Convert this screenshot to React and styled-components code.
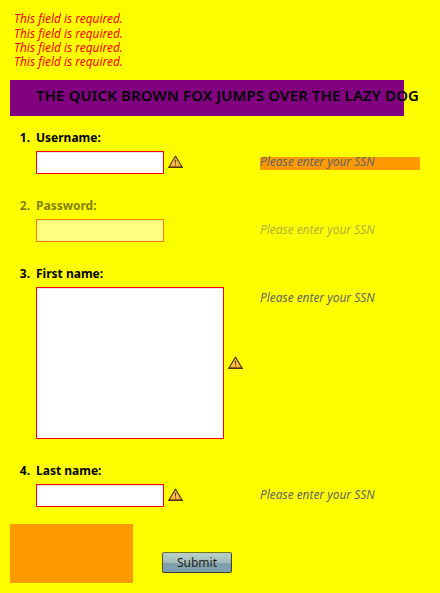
import React from 'react';
import styled, { createGlobalStyle } from 'styled-components';

const GlobalStyle = createGlobalStyle`
  * { box-sizing: border-box; }
  body {
    margin: 0;
    background: #ff0;
    color: #000;
    font-family: 'Noto Sans', sans-serif;
    font-size: 12px;
    line-height: 14.4px;
  }
`;

const Form = styled.form`
  width: 440px;
  height: 593px;
  padding: 11px 10px 10px;
  overflow: hidden;
`;

const Errors = styled.ul`
  list-style: none;
  margin: 0;
  padding: 0.2px 4px 0;
  height: 69px;
  color: #f00;
  font-size: 11.9px;
  font-style: italic;
`;

const Title = styled.h1`
  width: 394px;
  height: 36px;
  margin: 0 0 14px;
  padding-left: 26px;
  background: #800080;
  font-size: 14.9px;
  font-weight: 600;
  letter-spacing: 0.18px;
  line-height: 30px;
  text-transform: uppercase;
  white-space: nowrap;
`;

const Fields = styled.ol`
  list-style: none;
  margin: 0;
  padding: 0;
`;

const Row = styled.li`
  display: grid;
  grid-template-columns: 20px 218px 160px;
  grid-template-rows: 15px auto;
  row-gap: 6px;
  column-gap: 6px;
  height: ${(p) => p.$height}px;
  opacity: ${(p) => (p.$disabled ? 0.5 : 1)};
`;

const Number = styled.span`
  font-weight: 700;
  text-align: right;
  line-height: 15px;
`;

const Label = styled.label`
  grid-column: 2 / 4;
  font-weight: 700;
  line-height: 15px;
`;

const Control = styled.div`
  grid-column: 2;
  display: flex;
  align-items: center;
  align-self: start;
  gap: 4px;
`;

const Input = styled.input`
  display: block;
  width: 128px;
  height: 23px;
  margin: 0;
  padding: 3px;
  border: 1px solid #f00;
  border-radius: 0;
  background: #fff;
  box-shadow: inset 0 1px #e4e4e4;
  outline: none;
`;

const TextArea = styled(Input).attrs({ as: 'textarea' })`
  width: 188px;
  height: 152px;
  resize: none;
`;

const Hint = styled.div`
  align-self: start;
  height: 13px;
  margin-top: 6px;
  background: ${(p) => (p.$highlight ? '#f90' : 'transparent')};
  color: #666;
  font-size: 11.9px;
  font-style: italic;
  line-height: 9px;
`;

const Footer = styled.div`
  display: flex;
  align-items: flex-end;
  gap: 29px;
  height: 59px;
`;

const Block = styled.div`
  width: 123px;
  height: 59px;
  background: #f90;
`;

const Submit = styled.button`
  width: 70px;
  height: 21px;
  margin: 0 0 10px;
  padding: 0;
  border: 1px solid #4c4c00;
  border-color: #6b741c #3c4a28 #38412c #4c581f;
  border-radius: 2px;
  background: linear-gradient(#b9d0c5 0%, #a3bcb9 50%, #819fa9 51%, #7f9faf 100%);
  color: #1e1e1e;
  font: 12px/19px 'Noto Sans', sans-serif;
`;

const WarningSvg = styled.svg`
  display: block;
  flex: none;
  margin-bottom: 2px;
`;

function Warning() {
  return (
    <WarningSvg width="15" height="13" viewBox="0 0 15 13">
      <defs>
        <linearGradient id="warningFill" x1="0" y1="0" x2="0" y2="1">
          <stop offset="0" stopColor="#ffe477" />
          <stop offset="1" stopColor="#f9ad2c" />
        </linearGradient>
      </defs>
      <path d="M7.5 1.1 L14 12 H1 Z" fill="url(#warningFill)" stroke="#513514" strokeWidth="1.1" strokeLinejoin="round" />
      <path d="M0 12.4 H15" stroke="#4a2d16" strokeWidth="1" />
      <path d="M7.5 4.5 V8.5 M7.5 9.5 V10.5" stroke="#693713" strokeWidth="1" />
      <path d="M6.1 5.5 H8.9" stroke="#a75d16" strokeWidth="0.7" />
    </WarningSvg>
  );
}

const fields = [
  { label: 'Username:', height: 68, highlight: true, warning: true },
  { label: 'Password:', height: 68, disabled: true },
  { label: 'First name:', height: 197, multiline: true, warning: true },
  { label: 'Last name:', height: 61, warning: true },
];

export default function App() {
  return (
    <>
      <GlobalStyle />
      <Form>
        <Errors>
          {fields.map((field) => (
            <li key={field.label}>This field is required.</li>
          ))}
        </Errors>
        <Title>The quick brown fox jumps over the lazy dog</Title>
        <Fields>
          {fields.map((field, i) => (
            <Row key={field.label} $height={field.height} $disabled={field.disabled}>
              <Number>{i + 1}.</Number>
              <Label htmlFor={`field${i}`}>{field.label}</Label>
              <Control>
                {field.multiline ? <TextArea id={`field${i}`} /> : <Input id={`field${i}`} />}
                {field.warning && <Warning />}
              </Control>
              <Hint $highlight={field.highlight}>Please enter your SSN</Hint>
            </Row>
          ))}
        </Fields>
        <Footer>
          <Block />
          <Submit type="button">Submit</Submit>
        </Footer>
      </Form>
    </>
  );
}
